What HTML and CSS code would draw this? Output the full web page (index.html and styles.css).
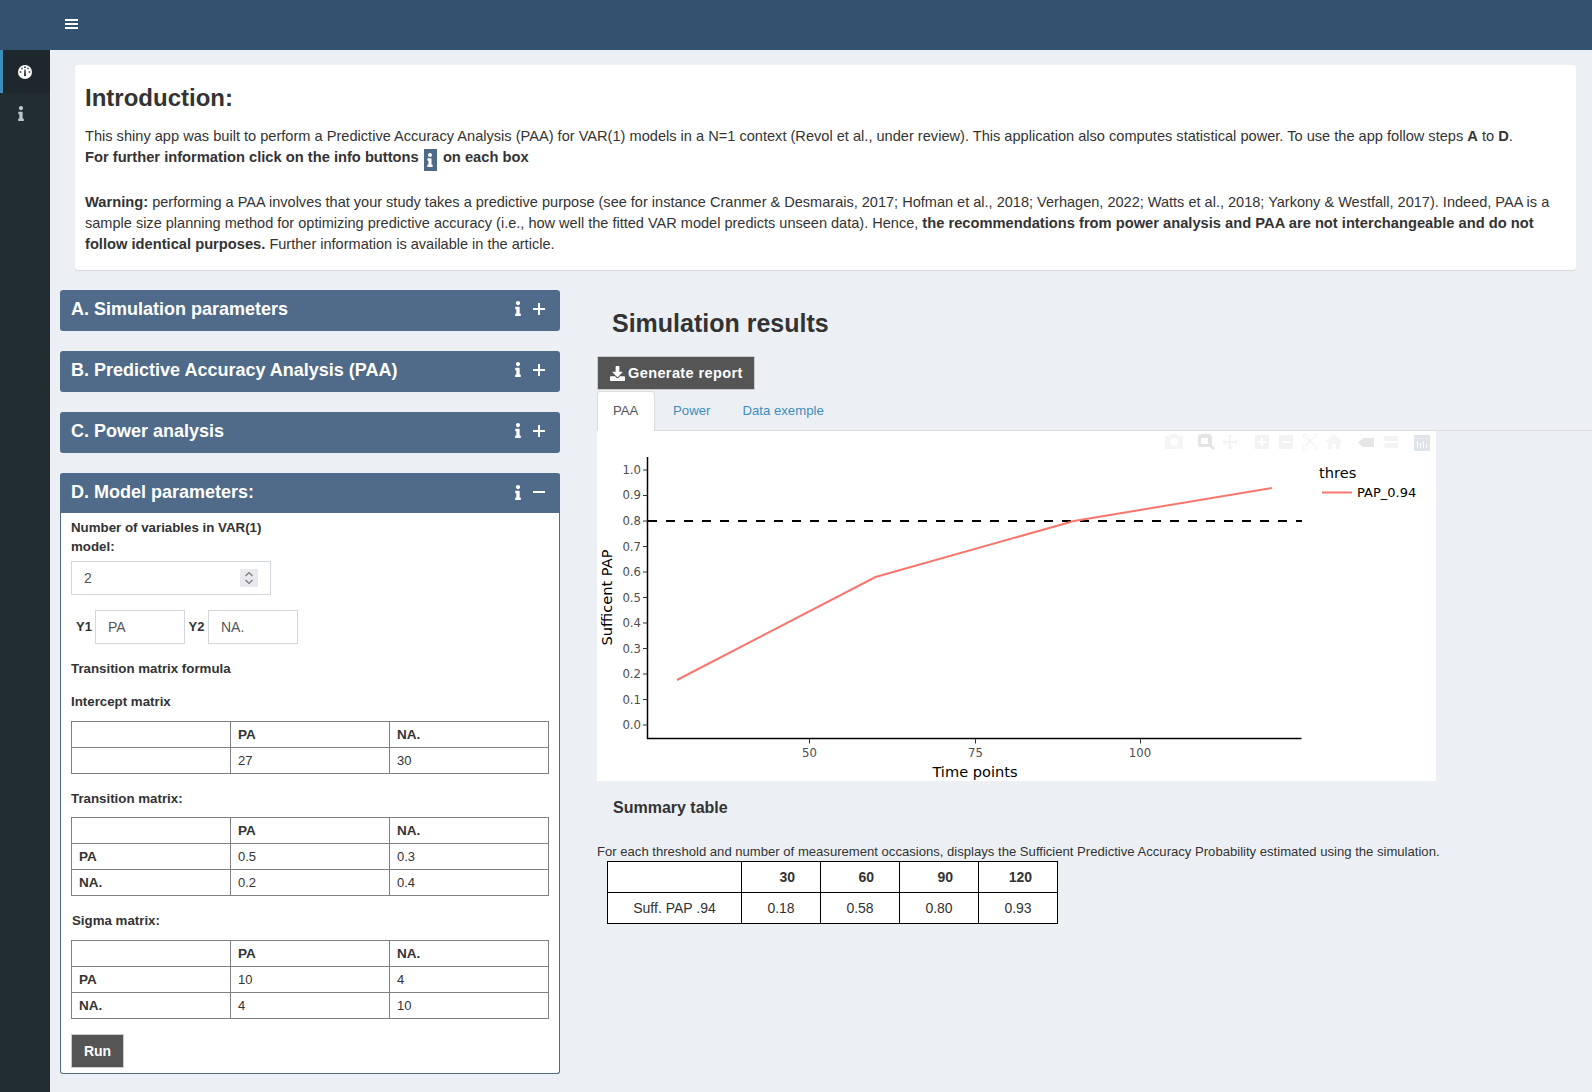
FILE: index.html
```html
<!DOCTYPE html>
<html lang="en">
<head>
<meta charset="utf-8">
<title>PAA for VAR(1)</title>
<link rel="stylesheet" href="styles.css">
</head>
<body>
<svg class="defs" aria-hidden="true">
  <symbol id="i-info" viewBox="0 0 192 512"><path d="M20 424.229h20V279.771H20c-11.046 0-20-8.954-20-20V212c0-11.046 8.954-20 20-20h112c11.046 0 20 8.954 20 20v212.229h20c11.046 0 20 8.954 20 20V492c0 11.046-8.954 20-20 20H20c-11.046 0-20-8.954-20-20v-47.771c0-11.046 8.954-20 20-20zM96 0C56.235 0 24 32.235 24 72s32.235 72 72 72 72-32.235 72-72S135.764 0 96 0z"/></symbol>
  <symbol id="i-plus" viewBox="0 0 12 12"><path d="M5 0h2v5h5v2H7v5H5V7H0V5h5z"/></symbol>
  <symbol id="i-minus" viewBox="0 0 12 12"><path d="M0 5h12v2H0z"/></symbol>
  <symbol id="i-download" viewBox="0 0 512 512"><path d="M216 0h80c13.3 0 24 10.7 24 24v168h87.7c17.800 0 26.700 21.500 14.100 34.100L269.700 378.300c-7.500 7.500-19.800 7.500-27.300 0L90.100 226.100c-12.600-12.600-3.700-34.100 14.100-34.100H192V24c0-13.300 10.700-24 24-24zm296 376v112c0 13.300-10.700 24-24 24H24c-13.300 0-24-10.700-24-24V376c0-13.300 10.700-24 24-24h146.700l49 49c20.100 20.100 52.500 20.100 72.600 0l49-49H488c13.300 0 24 10.700 24 24z"/></symbol>
</svg>

<header class="topbar">
  <svg class="hamburger" viewBox="0 0 13 12"><path d="M0 1h13v2H0zM0 5h13v2H0zM0 9h13v2H0z"/></svg>
</header>

<div class="shell">
  <nav class="sidebar">
    <a class="nav-item active">
      <svg class="nav-gauge" viewBox="0 0 14 14"><circle cx="7" cy="7" r="7" fill="#fff"/><path d="M6.200 1.500h1.600v1.600H6.200zM1.700 6.200h1.600v1.600H1.700zM10.700 6.200h1.600v1.600h-1.600zM3.100 3.100l1.100-.6.700 1.200-1.100.7zM9.800 2.500l1.100.6-.7 1.300-1.100-.7zM6.400 4.500h1.200l.3 5.200a1 1 0 1 1-1.800 0z" fill="#1e282c"/></svg>
    </a>
    <a class="nav-item nav-lower">
      <svg class="nav-info"><use href="#i-info"/></svg>
    </a>
  </nav>

  <main class="content">
    <section class="intro">
      <h2>Introduction:</h2>
      <p>This shiny app was built to perform a Predictive Accuracy Analysis (PAA) for VAR(1) models in a N=1 context (Revol et al., under review). This application also computes statistical power. To use the app follow steps <b>A</b> to <b>D</b>.<br>
      <b>For further information click on the info buttons <span class="info-chip"><svg><use href="#i-info"/></svg></span> on each box</b></p>
      <p class="warning"><b>Warning:</b> performing a PAA involves that your study takes a predictive purpose (see for instance Cranmer &amp; Desmarais, 2017; Hofman et al., 2018; Verhagen, 2022; Watts et al., 2018; Yarkony &amp; Westfall, 2017). Indeed, PAA is a sample size planning method for optimizing predictive accuracy (i.e., how well the fitted VAR model predicts unseen data). Hence, <b>the recommendations from power analysis and PAA are not interchangeable and do not follow identical purposes.</b> Further information is available in the article.</p>
    </section>

    <div class="columns">
      <div class="left">
        <section class="box">
          <div class="box-head"><h3>A. Simulation parameters</h3><svg class="tool-i"><use href="#i-info"/></svg><svg class="tool-pm"><use href="#i-plus"/></svg></div>
        </section>
        <section class="box">
          <div class="box-head"><h3>B. Predictive Accuracy Analysis (PAA)</h3><svg class="tool-i"><use href="#i-info"/></svg><svg class="tool-pm"><use href="#i-plus"/></svg></div>
        </section>
        <section class="box">
          <div class="box-head"><h3>C. Power analysis</h3><svg class="tool-i"><use href="#i-info"/></svg><svg class="tool-pm"><use href="#i-plus"/></svg></div>
        </section>
        <section class="box open">
          <div class="box-head"><h3>D. Model parameters:</h3><svg class="tool-i"><use href="#i-info"/></svg><svg class="tool-pm"><use href="#i-minus"/></svg></div>
          <div class="box-body">
            <label class="num-label">Number of variables in VAR(1)<br>model:</label>
            <div class="num-wrap">
              <input class="field num-field" type="text" value="2">
              <svg class="spinner" viewBox="0 0 18 18"><rect width="18" height="18" fill="#e9e9ee"/><path d="M5.500 7l3.500-3.500L12.500 7M5.500 11l3.500 3.500L12.500 11" fill="none" stroke="#777" stroke-width="1.200"/></svg>
            </div>
            <div class="names">
              <span class="y1">Y1</span><input class="field name-field" type="text" value="PA">
              <span class="y2">Y2</span><input class="field name-field" type="text" value="NA.">
            </div>
            <div class="sub s1">Transition matrix formula</div>
            <div class="sub s2">Intercept matrix</div>
            <table class="matrix">
              <tr><td></td><th>PA</th><th>NA.</th></tr>
              <tr><td></td><td>27</td><td>30</td></tr>
            </table>
            <div class="sub s3">Transition matrix:</div>
            <table class="matrix">
              <tr><td></td><th>PA</th><th>NA.</th></tr>
              <tr><th>PA</th><td>0.5</td><td>0.3</td></tr>
              <tr><th>NA.</th><td>0.2</td><td>0.4</td></tr>
            </table>
            <div class="sub s4">Sigma matrix:</div>
            <table class="matrix">
              <tr><td></td><th>PA</th><th>NA.</th></tr>
              <tr><th>PA</th><td>10</td><td>4</td></tr>
              <tr><th>NA.</th><td>4</td><td>10</td></tr>
            </table>
            <button class="btn run">Run</button>
          </div>
        </section>
      </div>

      <div class="right">
        <h2 class="results-title">Simulation results</h2>
        <button class="btn report"><svg><use href="#i-download"/></svg>Generate report</button>
        <ul class="tabs">
          <li class="tab current">PAA</li>
          <li class="tab">Power</li>
          <li class="tab">Data exemple</li>
        </ul>
        <div class="plot">
          <svg class="chart" viewBox="0 0 839 350" width="839" height="350">
            <g class="modebar" transform="translate(-597 -431)">
              <path d="M1165 436h5l1-2h6l1 2h5v13h-18z M1174 438a4 4 0 1 0 .01 0z" fill="#f5f5f5" fill-rule="evenodd"/>
              <path d="M1201 434h7q4 0 4 4v6q0 3-3 3h-8q-3 0-3-3v-6q0-4 3-4zM1201 438v6h7v-6z" fill="#e4e4e4" fill-rule="evenodd"/>
              <path d="M1209 446l2-2 4 4-2 2z" fill="#e4e4e4"/>
              <path d="M1230 434l3 3h-2v4h4v-2l3 3-3 3v-2h-4v4h2l-3 3-3-3h2v-4h-4v2l-3-3 3-3v2h4v-4h-2z" fill="#f3f3f3"/>
              <path d="M1255 435h14v14h-14zM1261 438v3h-3v2h3v3h2v-3h3v-2h-3v-3z" fill="#f3f3f3" fill-rule="evenodd"/>
              <path d="M1279 435h14v14h-14zM1282 441v2h8v-2z" fill="#f3f3f3" fill-rule="evenodd"/>
              <path d="M1303 434h4v1h-3v3h-1zM1313 434h4v4h-1v-3h-3zM1303 446h1v3h3v1h-4zM1316 446h1v4h-4v-1h3zM1306 436l4 4 4-4 1 1-4 4 4 4-1 1-4-4-4 4-1-1 4-4-4-4z" fill="#f3f3f3"/>
              <path d="M1334 434l9 8h-3v7h-4v-5h-4v5h-4v-7h-3z" fill="#f5f5f5"/>
              <path d="M1363 438h11v9h-11l-5-4.500z" fill="#e6e6e6"/>
              <path d="M1385 436h13v5h-13zM1385 443h13v5h-13zM1383 438.500l2-2.500v5zM1383 445.500l2-2.500v5z" fill="#f3f3f3"/>
              <rect x="1414" y="435" width="16" height="16" fill="#dfe3ea"/>
              <path d="M1417 441h1v7h-1zM1420 443h1v5h-1zM1423 441h1v7h-1zM1426 444h1v4h-1zM1417 438h1v1h-1zM1420 438h1v1h-1zM1423 438h1v1h-1zM1426 438h1v1h-1z" fill="#fff"/>
            </g>
            <g transform="translate(-597 -431)">
              <path class="axis" d="M647.500 457V738.500H1301.500"/>
              <g class="ticks">
                <path d="M643 470h4.500M643 495.500h4.500M643 521h4.500M643 546.500h4.500M643 572h4.500M643 597.500h4.500M643 623h4.500M643 648.500h4.500M643 674h4.500M643 699.500h4.500M643 725h4.500M809.500 739v4.500M975.500 739v4.500M1140.500 739v4.500"/>
              </g>
              <g class="ytext">
                <text x="641" y="474">1.0</text><text x="641" y="499">0.9</text><text x="641" y="525">0.8</text><text x="641" y="550.500">0.7</text><text x="641" y="576">0.6</text><text x="641" y="601.500">0.5</text><text x="641" y="627">0.4</text><text x="641" y="652.500">0.3</text><text x="641" y="678">0.2</text><text x="641" y="703.500">0.1</text><text x="641" y="729">0.0</text>
              </g>
              <g class="xtext">
                <text x="809.500" y="757">50</text><text x="975.500" y="757">75</text><text x="1140" y="757">100</text>
              </g>
              <text class="axis-title" x="975" y="777" text-anchor="middle">Time points</text>
              <text class="axis-title" transform="translate(612 597.500) rotate(-90)" text-anchor="middle">Sufficent PAP</text>
              <path class="dash" d="M648 521H1302"/>
              <path class="series" d="M677 680L875.500 577L1074 521L1272 488"/>
              <text class="legend-title" x="1319" y="478">thres</text>
              <path class="series" d="M1322 492.500H1352"/>
              <text class="legend-text" x="1357" y="497">PAP_0.94</text>
            </g>
          </svg>
        </div>
        <h4 class="summary">Summary table</h4>
        <p class="caption">For each threshold and number of measurement occasions, displays the Sufficient Predictive Accuracy Probability estimated using the simulation.</p>
        <table class="results">
          <tr><th></th><th>30</th><th>60</th><th>90</th><th>120</th></tr>
          <tr><td>Suff. PAP .94</td><td>0.18</td><td>0.58</td><td>0.80</td><td>0.93</td></tr>
        </table>
      </div>
    </div>
  </main>
</div>
</body>
</html>
```

FILE: styles.css
```css
* { box-sizing: border-box; }
html, body { margin: 0; padding: 0; }
body {
  font-family: "Liberation Sans", Arial, sans-serif;
  font-size: 14px;
  line-height: 20px;
  color: #333;
  background: #ecf0f5;
  height: 1092px;
  overflow: hidden;
}
.defs { position: absolute; width: 0; height: 0; }

.topbar {
  height: 50px;
  background: #325270;
  display: flex;
  align-items: center;
  padding: 0 0 2px 65px;
}
.hamburger { width: 13px; height: 12px; fill: #fff; }

.shell { display: flex; height: 1042px; }
.sidebar { width: 50px; flex: none; background: #222d32; }
.nav-item { display: flex; align-items: center; height: 43px; padding-left: 18px; }
.nav-item.active { background: #1e282c; border-left: 3px solid #3c8dbc; padding-left: 15px; }
.nav-lower { padding-bottom: 2px; }
.nav-gauge { width: 14px; height: 14px; }
.nav-info { width: 6px; height: 15px; fill: #b8c7ce; }

.content { flex: 1; min-width: 0; padding-top: 15px; }

.intro {
  margin: 0 16px 0 25px;
  height: 205px;
  padding: 10px;
  background: #fff;
  border-radius: 3px;
  box-shadow: 0 1px 1px rgba(0,0,0,.1);
}
.intro h2 { margin: 10px 0 15px; font-size: 24px; line-height: 26px; font-weight: 700; }
.intro p { margin: 0; font-size: 14.6px; line-height: 21px; }
.intro b { font-size: 14.7px; }
.intro .warning { margin-top: 21px; font-size: 14.54px; }
.info-chip {
  display: inline-flex;
  align-items: center;
  justify-content: center;
  width: 13px;
  height: 22px;
  margin: 0 2px 0 1px;
  vertical-align: -5px;
  background: #4f6b89;
}
.info-chip svg { width: 6px; height: 14px; fill: #fff; }

.columns { display: grid; grid-template-columns: 500px 1fr; column-gap: 37px; padding: 20px 0 0 10px; }

.box { margin-bottom: 20px; border-radius: 3px; background: #4f6b89; }
.box-head {
  display: flex;
  align-items: center;
  height: 41px;
  padding: 0 15px 4px 11px;
  color: #fff;
  fill: #fff;
  border-radius: 3px 3px 0 0;
}
.box-head h3 { flex: 1; margin: 0; font-size: 18px; line-height: 20px; font-weight: 700; }
.tool-i { width: 6px; height: 15px; margin-right: 12px; }
.tool-pm { width: 12px; height: 12px; }
.box.open { height: 601px; background: #fff; border: 1px solid #4f6b89; border-top: 0; }
.box.open .box-head { height: 40px; margin: 0 -1px; padding-bottom: 2px; background: #4f6b89; }

.box-body { padding: 5px 10px 0; }
.num-label { display: block; font-size: 13.3px; font-weight: 700; line-height: 19px; }
.field {
  display: block;
  height: 34px;
  padding: 6px 12px;
  font: 400 14px/20px "Liberation Sans", Arial, sans-serif;
  color: #555;
  background: #fff;
  border: 1px solid #d2d6de;
  border-radius: 0;
  outline: 0;
}
.num-wrap { position: relative; width: 200px; margin-top: 5px; }
.num-field { width: 200px; }
.spinner { position: absolute; top: 8px; right: 13px; width: 18px; height: 18px; }
.names { display: flex; align-items: center; margin-top: 15px; font-size: 13px; font-weight: 700; }
.y1 { padding-left: 5px; width: 24px; }
.y2 { width: 23px; text-align: center; }
.name-field { width: 90px; }
.sub { font-size: 13.3px; font-weight: 700; }
.s1 { margin-top: 15px; }
.s2 { margin: 13px 0 9px; }
.s3 { margin: 15px 0 8px; }
.s4 { margin: 15px 0 9px; padding-left: 1px; }

.matrix { width: 478px; table-layout: fixed; border-collapse: collapse; font-size: 13px; }
.matrix th, .matrix td {
  height: 26px;
  padding: 0 7px;
  border: 1px solid #808080;
  text-align: left;
  font-weight: 400;
}
.matrix th { font-size: 13.5px; font-weight: 700; }

.btn {
  display: inline-flex;
  align-items: center;
  font: 700 14px/20px "Liberation Sans", Arial, sans-serif;
  color: #fff;
  background: #555;
  border: 1px solid #ccc;
  border-radius: 0;
}
.run { height: 34px; width: 53px; margin-top: 15px; justify-content: center; padding: 0; }

.right { min-width: 0; }
.results-title { margin: 19px 0 0 15px; font-size: 25px; line-height: 28px; font-weight: 700; }
.report { height: 34px; margin-top: 19px; padding: 0 11px 0 12px; display: flex; font-size: 14.5px; letter-spacing: .4px; }
.report svg { width: 15px; height: 15px; fill: #fff; margin-right: 3px; }
.tabs { display: flex; list-style: none; margin: 1px 0 0; padding: 0; height: 40px; border-bottom: 1px solid #ddd; font-size: 13.2px; }
.tab { padding: 10px 15px 10px 16px; height: 40px; margin-right: 1px; color: #3c8dbc; }
.tab.current { color: #555; background: #fff; border: 1px solid #ddd; border-bottom: 0; border-radius: 3px 3px 0 0; padding: 9px 14px 9px 15px; width: 58px; margin-right: 2px; }

.plot { width: 839px; height: 350px; background: #fff; }
.chart { display: block; }
.chart text { font-family: "DejaVu Sans", Verdana, sans-serif; }
.axis { fill: none; stroke: #000; stroke-width: 1.5; }
.ticks path { stroke: #333; stroke-width: 1; fill: none; }
.ytext text { font-size: 11.7px; fill: #4d4d4d; text-anchor: end; }
.xtext text { font-size: 11.7px; fill: #4d4d4d; text-anchor: middle; }
.axis-title { font-size: 14.6px; fill: #000; }
.dash { stroke: #000; stroke-width: 2; stroke-dasharray: 9 9; fill: none; }
.series { stroke: #f8766d; stroke-width: 2; fill: none; }
.legend-title { font-size: 14.6px; fill: #000; }
.legend-text { font-size: 13px; fill: #000; }

.summary { margin: 18px 0 0 16px; font-size: 16px; line-height: 18px; font-weight: 700; }
.caption { margin: 26px 0 0; font-size: 13.1px; line-height: 18px; white-space: nowrap; }
.results { margin: 0 0 0 10px; width: 451px; table-layout: fixed; border-collapse: collapse; background: #fff; }
.results th, .results td { height: 31px; padding: 0; border: 1px solid #000; text-align: center; font-weight: 400; }
.results th { font-weight: 700; text-align: right; padding-right: 25px; }
.results tr:first-child th:first-child { width: 134px; }
```
